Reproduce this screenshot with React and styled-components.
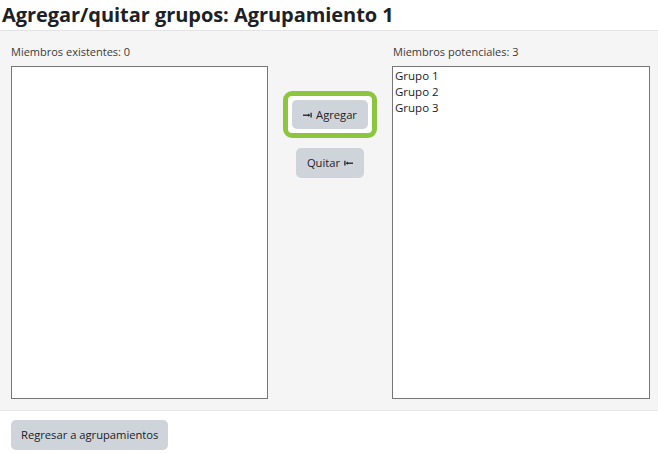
import React from 'react'
import styled, {createGlobalStyle} from 'styled-components'

const GlobalStyle = createGlobalStyle`
  html, body {
    margin: 0;
    padding: 0;
    background: #fff;
  }
  body {
    font-family: "Open Sans", "Noto Sans", sans-serif;
    color: #1d2125;
  }
`;

const Page = styled.div`
  width: 658px;
`;

const Title = styled.h2`
  margin: 0;
  padding: 1px 0 0 2px;
  height: 29px;
  font-size: 20px;
  font-weight: 700;
  line-height: 27px;
  color: #1d2125;
  letter-spacing: -0.05px;
`;

const Panel = styled.div`
  background: #f5f5f5;
  border-top: 1px solid #e3e3e3;
  border-bottom: 1px solid #e6e6e6;
  padding: 12px 8px 11px 11px;
  display: grid;
  grid-template-columns: 257px 124px 258px;
`;

const Column = styled.div`
  display: flex;
  flex-direction: column;
`;

const Label = styled.label`
  font-size: 11px;
  line-height: 17px;
  color: #3a3a3a;
  margin-bottom: 6px;
  padding-left: ${p => p.$indent || 0}px;
`;

const ListBox = styled.div`
  box-sizing: border-box;
  height: 333px;
  background: #fff;
  border: 1px solid #767676;
  padding: 1px 2px;
`;

const Option = styled.div`
  font-size: 11.5px;
  line-height: 16px;
  color: #1d2125;
`;

const Middle = styled.div`
  display: flex;
  flex-direction: column;
  align-items: center;
  padding-top: 48px;
  gap: 10px;
`;

const Focus = styled.div`
  border: 5px solid #8cc63f;
  border-radius: 9px;
  padding: 4px;
  background: #fff;
  display: flex;
`;

const Button = styled.button`
  display: inline-flex;
  align-items: center;
  justify-content: center;
  gap: 4px;
  box-sizing: border-box;
  height: ${p => p.$h || 30}px;
  padding: 0 ${p => p.$px || 10}px;
  border: none;
  border-radius: 5px;
  background: #ced4da;
  color: #1d2125;
  font-family: inherit;
  font-size: 11.2px;
  line-height: 16px;
  cursor: pointer;
`;

const Footer = styled.div`
  padding: 9px 0 0 11px;
`;

// small "arrow to bar" glyph used on the move buttons
const Arrow = ({flip}) => (
  <svg width="9" height="6" viewBox="0 0 9 6" style={flip ? {transform: 'scaleX(-1)'} : undefined}>
    <path d="M0 3.2h6.5" stroke="#1d2125" strokeWidth="1.3"/>
    <path d="M5 1.6l2.2 1.6L5 4.8z" fill="#1d2125"/>
    <path d="M8.1 0.8v4.8" stroke="#1d2125" strokeWidth="1.3"/>
  </svg>
);

export default function App() {
  const potential = ['Grupo 1', 'Grupo 2', 'Grupo 3'];
  return (
    <Page>
      <GlobalStyle/>
      <Title>Agregar/quitar grupos: Agrupamiento 1</Title>
      <Panel>
        <Column>
          <Label>Miembros existentes: 0</Label>
          <ListBox/>
        </Column>
        <Middle>
          <Focus>
            <Button $h={29} $px={11}><Arrow/>Agregar</Button>
          </Focus>
          <Button $h={30} $px={11}>Quitar<Arrow flip/></Button>
        </Middle>
        <Column>
          <Label $indent={1}>Miembros potenciales: {potential.length}</Label>
          <ListBox>
            {potential.map(g => <Option key={g}>{g}</Option>)}
          </ListBox>
        </Column>
      </Panel>
      <Footer>
        <Button $h={30} $px={10}>Regresar a agrupamientos</Button>
      </Footer>
    </Page>
  )
}
